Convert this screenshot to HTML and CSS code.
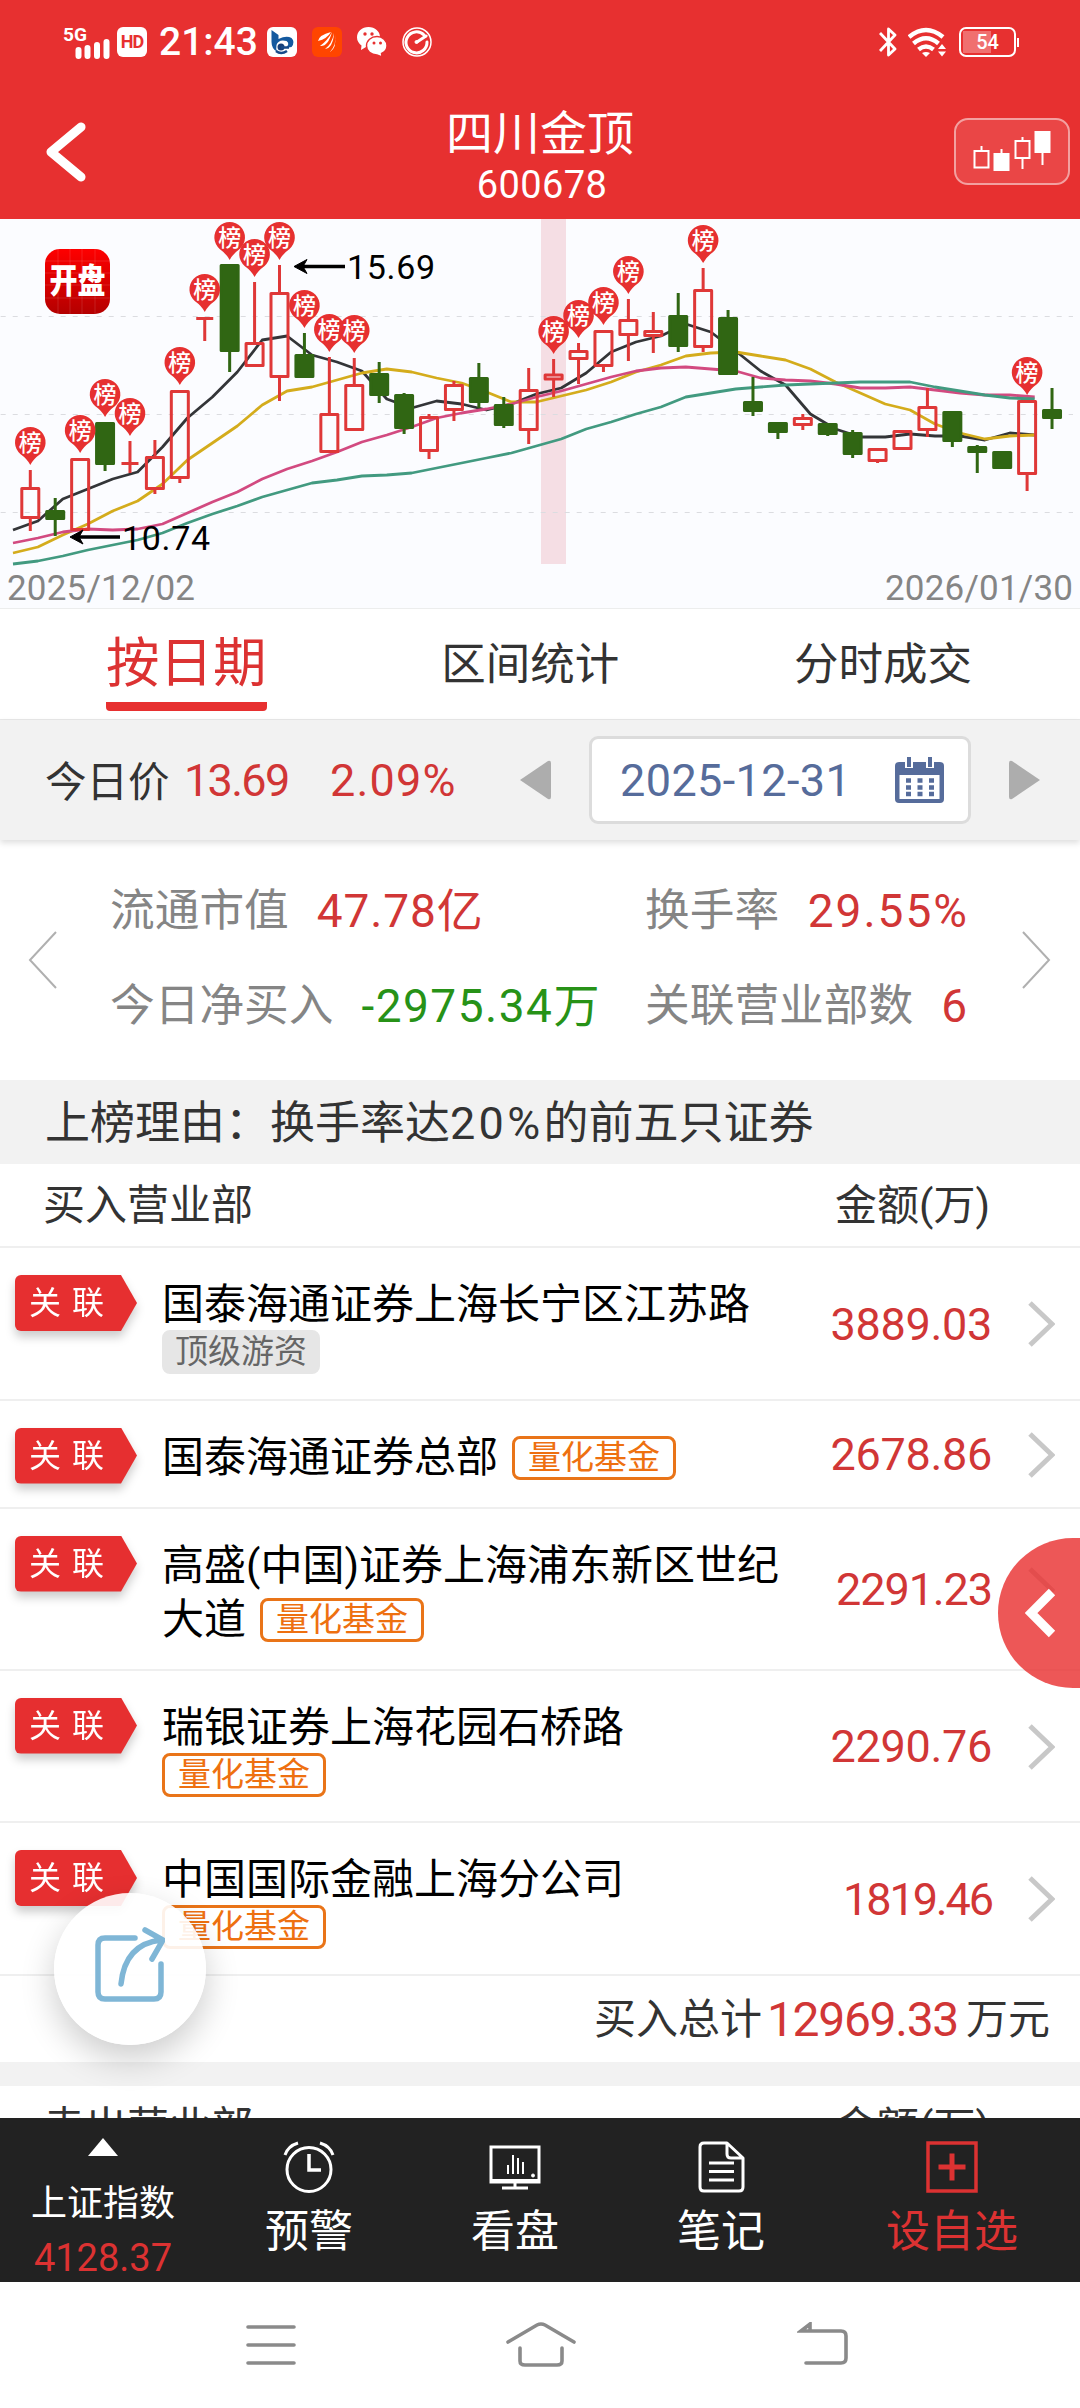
FILE: index.html
```html
<!DOCTYPE html>
<html lang="zh-CN">
<head>
    <meta charset="UTF-8">
    <meta name="viewport" content="width=device-width, initial-scale=1.0">
    <title>四川金顶 600678</title>
    <link rel="stylesheet" href="styles.css">
</head>
<body>
    <div class="page">
        <header class="header">
            <div class="status-bar">
                <div class="status-left">
                    <svg class="signal" width="50" height="34" viewBox="0 -2 50 34">
                        <text x="0" y="13.500" textLength="24" lengthAdjust="spacingAndGlyphs">5G</text>
                        <path d="M15.500 23v6M24.500 21v8M34 18v11M43.500 15v14"/>
                    </svg>
                    <span class="hd">HD</span>
                    <span class="time">21:43</span>
                    <svg class="app-icon" width="30" height="30" viewBox="0 0 30 30">
                        <rect width="30" height="30" rx="6" fill="#fff"/>
                        <path d="M4.500 3l7 5v4q8-4 13-1q4 4 0 9l-6 1q5-4 1-7q-8-2-10 4q-1 4 1 7q-6-3-6-10z" fill="#14599f"/>
                        <circle cx="14" cy="20" r="3.500" fill="#173f78"/>
                        <path d="M14 20.500h8" stroke="#174a89" stroke-width="2.500"/>
                        <path d="M9 24q5 4 11 0" fill="none" stroke="#174a89" stroke-width="2.500"/>
                    </svg>
                    <svg class="app-icon" width="30" height="30" viewBox="0 0 30 30">
                        <rect width="30" height="30" rx="6" fill="#ff4500"/>
                        <g fill="#fff">
                            <path d="M19 5Q7 8 6 14Q15 12 19 5z"/>
                            <path d="M20 5Q16 13 8 19Q16 20 20 5z"/>
                            <path d="M22 6Q20 17 13 22Q21 21 22 6z"/>
                            <path d="M23 7Q25 17 18 25Q25 21 23 7z"/>
                        </g>
                    </svg>
                    <svg class="app-icon" width="30" height="30" viewBox="0 0 30 30">
                        <path d="M11.500 0C5 0 0 4.500 0 10.500c0 3.500 2 6 4.500 8L4 23l5-3c8 1 14-4 14-10C23 4.500 18 0 11.500 0z" fill="#fff"/>
                        <circle cx="8" cy="7" r="1.700" fill="#e73030"/>
                        <circle cx="15" cy="7" r="1.700" fill="#e73030"/>
                        <path d="M20 9.500c-6 0-10.500 4-10.500 9.300S14 28 20 28l5 1.800-.500-3.300c3.500-1.500 5.500-4.500 5.500-7.700 0-5.300-4.500-9.300-10-9.300z" fill="#fff" stroke="#e73030" stroke-width="1.400"/>
                        <circle cx="17" cy="16" r="1.500" fill="#e73030"/>
                        <circle cx="23.500" cy="16" r="1.500" fill="#e73030"/>
                    </svg>
                    <svg class="app-icon" width="30" height="30" viewBox="0 0 30 30" fill="none" stroke="#fff" stroke-linecap="round">
                        <circle cx="15" cy="15" r="14" stroke-width="1.500"/>
                        <path d="M22 8a10.500 10.500 0 1 0 3 7" stroke-width="3"/>
                        <path d="M15 15l9-6" stroke-width="3"/>
                        <circle cx="14.500" cy="15" r="1.500" fill="#fff"/>
                    </svg>
                </div>
                <div class="status-right">
                    <svg width="18" height="30" viewBox="0 0 18 30" fill="none" stroke="#fff" stroke-width="2.800">
                        <path d="M1 6l15 16-6.500 6V2L16 8 1 24" stroke-linejoin="round"/>
                    </svg>
                    <svg class="wifi" width="39" height="30" viewBox="0 0 39 30" fill="none" stroke="#fff" stroke-width="4.500">
                        <path d="M1 10q17-14 34 0M5.500 16.500q12.500-10.500 25 0M10.500 22.500q7.500-6 15 0"/>
                        <path d="M14 26q4-2 8 0l-4 4z" fill="#fff" stroke="none"/>
                        <path d="M30 22l4-5 4 5zM30 24.500h8l-4 5z" fill="#fff" stroke="none"/>
                    </svg>
                    <div class="battery"><span>54</span></div>
                </div>
            </div>
            <div class="title-bar">
                <svg class="back" width="40" height="60" viewBox="0 0 40 60">
                    <path d="M35 5L5 30l30 25"/>
                </svg>
                <div class="title">
                    <h1>四川金顶</h1>
                    <p>600678</p>
                </div>
                <div class="kline-btn">
                    <svg width="78" height="42" viewBox="0 0 78 42" fill="none" stroke="#fff" stroke-width="2">
                        <path d="M8.500 15v5M1.500 20h14v16.500h-14zM28.500 18v5M49.500 6v4M49.500 27v11M42.500 10h14v17h-14zM69.500 22v12"/>
                        <path d="M21.500 23h14v16h-14zM62.500 1h14v20h-14z" fill="#fff"/>
                    </svg>
                </div>
            </div>
        </header>

        <section class="chart">
            <svg id="kline" width="1080" height="389" viewBox="0 0 1080 389">
                <defs>
                    <linearGradient id="logoFill" x1="0" y1="0" x2="0" y2="1">
                        <stop offset="0" stop-color="#fe0000"/>
                        <stop offset="1" stop-color="#b40000"/>
                    </linearGradient>
                </defs>
                <rect class="band" x="541" y="0" width="25" height="345"/>
                <path class="grid" d="M0.700 97.500H1073M0.700 195.500H1073M0.700 293.500H1073"/>
                <g id="averages"></g>
                <g id="candles"></g>
                <g id="pins"></g>
                <g class="logo">
                    <rect x="45" y="30" width="65" height="65" rx="15" fill="url(#logoFill)"/>
                    <path d="M58 30v65M70 30v65M82 30v65M95 30v65M45 42h65M45 54h65M45 66h65M45 79h65"/>
                    <text x="77.500" y="62" transform="translate(0 -1.500) scale(1 1.220)" text-anchor="middle">开盘</text>
                </g>
                <g class="price-mark">
                    <path d="M300 47.500h45M120 318h-46"/>
                    <path class="head" d="M294 47.500l13-7-4 7 4 7zM70 318l13-7-4 7 4 7z"/>
                    <text x="347" y="59.500" textLength="88">15.69</text>
                    <text x="122" y="330.500" textLength="88">10.74</text>
                </g>
                <g class="dates">
                    <text x="7" y="381" textLength="188">2025/12/02</text>
                    <text x="885" y="381" textLength="188">2026/01/30</text>
                </g>
            </svg>
        </section>

        <nav class="tabs">
            <a class="tab active">按日期</a>
            <a class="tab">区间统计</a>
            <a class="tab">分时成交</a>
        </nav>

        <section class="price-bar">
            <span class="price-label">今日价</span>
            <span class="price">13.69</span>
            <span class="change">2.09%</span>
            <svg class="prev" width="31" height="40" viewBox="0 0 31 40"><path d="M0 20L28 1q3-1 3 2v34q0 3-3 2z"/></svg>
            <div class="date-box">
                <span>2025-12-31</span>
                <svg width="49" height="46" viewBox="0 0 49 46">
                    <path d="M4 5h41q4 0 4 4v33q0 4-4 4H4q-4 0-4-4V9q0-4 4-4z" fill="#566c9b"/>
                    <path d="M4.500 18h40v24h-40z" fill="#fff"/>
                    <path d="M14 0v11M35 0v11" stroke="#fff" stroke-width="8"/>
                    <path d="M14 0v10M35 0v10" stroke="#566c9b" stroke-width="4"/>
                    <path d="M11 23.500h28M11 30.500h28M11 37h28" stroke="#566c9b" stroke-width="4.500" stroke-dasharray="5 6.500"/>
                </svg>
            </div>
            <svg class="next" width="31" height="40" viewBox="0 0 31 40"><path d="M31 20L3 1Q0 0 0 3v34q0 3 3 2z"/></svg>
        </section>

        <section class="stats">
            <svg class="arrow" width="30" height="58" viewBox="0 0 30 58"><path d="M28 1L2 29l26 28"/></svg>
            <dl class="stats-grid">
                <div><dt>流通市值</dt><dd class="red">47.78亿</dd></div>
                <div class="spread"><dt>换手率</dt><dd class="red percent">29.55%</dd></div>
                <div><dt>今日净买入</dt><dd class="green">-2975.34万</dd></div>
                <div class="spread"><dt>关联营业部数</dt><dd class="red">6</dd></div>
            </dl>
            <svg class="arrow" width="30" height="58" viewBox="0 0 30 58"><path d="M2 1l26 28L2 57"/></svg>
        </section>

        <div class="reason">上榜理由：换手率达<span>20%</span>的前五只证券</div>

        <section class="branches">
            <div class="branch-head"><span>买入营业部</span><span>金额(万)</span></div>
            <div class="row">
                <span class="badge"><i>关联</i></span>
                <div class="name">国泰海通证券上海长宁区江苏路<span class="tag gray below">顶级游资</span></div>
                <span class="amount">3889.03</span>
                <svg class="more" width="27" height="46" viewBox="0 0 27 46"><path d="M2 2l22 21L2 44"/></svg>
            </div>
            <div class="row single">
                <span class="badge"><i>关联</i></span>
                <div class="name">国泰海通证券总部<span class="tag">量化基金</span></div>
                <span class="amount">2678.86</span>
                <svg class="more" width="27" height="46" viewBox="0 0 27 46"><path d="M2 2l22 21L2 44"/></svg>
            </div>
            <div class="row wrapped">
                <span class="badge"><i>关联</i></span>
                <div class="name">高盛(中国)证券上海浦东新区世纪大道<span class="tag">量化基金</span></div>
                <span class="amount narrow">2291.23</span>
                <svg class="more" width="27" height="46" viewBox="0 0 27 46"><path d="M2 2l22 21L2 44"/></svg>
            </div>
            <div class="row">
                <span class="badge"><i>关联</i></span>
                <div class="name">瑞银证券上海花园石桥路<span class="tag below">量化基金</span></div>
                <span class="amount">2290.76</span>
                <svg class="more" width="27" height="46" viewBox="0 0 27 46"><path d="M2 2l22 21L2 44"/></svg>
            </div>
            <div class="row">
                <span class="badge"><i>关联</i></span>
                <div class="name">中国国际金融上海分公司<span class="tag below">量化基金</span></div>
                <span class="amount narrower">1819.46</span>
                <svg class="more" width="27" height="46" viewBox="0 0 27 46"><path d="M2 2l22 21L2 44"/></svg>
            </div>
            <div class="total">买入总计<b>12969.33</b>万元</div>
        </section>

        <section class="branches sell">
            <div class="branch-head"><span>卖出营业部</span><span>金额(万)</span></div>
        </section>

        <footer class="toolbar">
            <div class="index">
                <svg width="30" height="18" viewBox="0 0 30 18"><path d="M15 0l15 18H0z" fill="#fff"/></svg>
                <span class="index-name">上证指数</span>
                <span class="index-value">4128.37</span>
            </div>
            <div class="tool">
                <svg width="52" height="52" viewBox="0 0 52 52">
                    <circle cx="26" cy="28.500" r="22"/>
                    <path d="M26 13v16h12" stroke-width="3.500"/>
                    <path d="M2 14Q5 5 15 2M50 14Q47 5 37 2"/>
                </svg>
                <span>预警</span>
            </div>
            <div class="tool">
                <svg width="52" height="52" viewBox="0 0 52 52">
                    <path d="M2 6h48v35H2zM26 41v5M13 47h26"/>
                    <path d="M2 40h48" stroke-width="4"/>
                    <path d="M19 24v9M24 14v19M29 17v16M34 21v12" stroke-width="2"/>
                    <circle cx="44" cy="34.500" r="1.500" fill="#fff" stroke-width="1"/>
                </svg>
                <span>看盘</span>
            </div>
            <div class="tool">
                <svg width="52" height="52" viewBox="0 0 52 52">
                    <path d="M9 2h23L48 17v29q0 4-4 4H9q-4 0-4-4V6q0-4 4-4zM32 2v11q0 4 4 4h12" stroke-linejoin="round"/>
                    <path d="M14 22h25M14 30.500h25M14 39h25"/>
                </svg>
                <span>笔记</span>
            </div>
            <div class="tool add">
                <svg width="52" height="52" viewBox="0 0 52 52">
                    <path d="M2 2h48v48H2z"/>
                    <path d="M26 12.500v27M12.500 26h27" stroke-width="5"/>
                </svg>
                <span>设自选</span>
            </div>
        </footer>

        <div class="system-nav">
            <svg width="50" height="46" viewBox="0 0 50 46"><path d="M2 5h46M2 23h46M2 41h46"/></svg>
            <svg class="home" width="70" height="46" viewBox="0 0 70 46"><path d="M2 20L31 3q4-2 8 0l29 17M14 26v13q0 4 5 4h32q5 0 5-4V26"/></svg>
            <svg width="52" height="46" viewBox="0 0 52 46"><path d="M9 41h35q5 0 5-5V14q0-5-5-5H4L13 2v6"/></svg>
        </div>

        <div class="share-btn">
            <svg width="70" height="78" viewBox="0 0 70 78">
                <path d="M40 11H10q-7 0-7 7v47q0 7 7 7h49q7 0 7-7V37"/>
                <path d="M26 57Q30 17 66 13M50 3l18 10-11 19"/>
            </svg>
        </div>
        <div class="drawer-btn">
            <svg width="32" height="50" viewBox="0 0 32 50"><path d="M27 4L6 25l21 21"/></svg>
        </div>
    </div>
    <script src="chart.js"></script>
</body>
</html>
```

FILE: styles.css
```css
* {
    box-sizing: border-box;
}
body {
    margin: 0;
    background: #fff;
    color: #333;
    font-family: Roboto, "Noto Sans CJK SC", sans-serif;
}
h1, p, dl, dd {
    margin: 0;
    font-weight: 400;
}
svg {
    display: block;
    flex: none;
}
.page {
    position: relative;
    width: 1080px;
    height: 2408px;
    overflow: hidden;
    display: flex;
    flex-direction: column;
}
.page > * {
    flex: none;
}

/* header */
.header {
    height: 219px;
    background: #e73030;
    color: #fff;
}
.status-bar {
    display: flex;
    justify-content: space-between;
    height: 84px;
    padding: 0 64px 0 63px;
    align-items: center;
}
.status-left, .status-right {
    display: flex;
    align-items: center;
}
.signal {
    overflow: visible;
}
.signal text {
    font-size: 19px;
    font-weight: 700;
    fill: #fff;
}
.signal path {
    stroke: #fff;
    stroke-width: 6;
    stroke-linecap: round;
}
.hd {
    width: 30px;
    height: 30px;
    margin-left: 4px;
    border-radius: 6px;
    background: #fff;
    color: #e73030;
    font-size: 18px;
    font-weight: 700;
    line-height: 30px;
    text-align: center;
    letter-spacing: -1px;
}
.time {
    width: 105px;
    margin-left: 12px;
    font-size: 39px;
    font-weight: 500;
    line-height: 40px;
}
.app-icon {
    margin-left: 3px;
    margin-right: 12px;
}
.wifi {
    margin: 0 12px 0 11px;
}
.battery {
    position: relative;
    width: 57px;
    height: 30px;
    border: 2px solid #fff;
    border-radius: 7px;
    background: linear-gradient(90deg, #f07070 28px, transparent 28px) 2px 2px / 49px 22px no-repeat;
    font-size: 20px;
    font-weight: 500;
    line-height: 27px;
    text-align: center;
}
.battery::after {
    content: "";
    position: absolute;
    right: -5px;
    top: 9px;
    width: 2px;
    height: 9px;
    background: #fff;
}
.title-bar {
    display: grid;
    grid-template-columns: 126px 1fr 116px;
    align-items: center;
    height: 135px;
    padding: 0 10px 0 0;
}
.back {
    margin-left: 46px;
    margin-top: 1px;
}
.back path {
    fill: none;
    stroke: #fff;
    stroke-width: 9;
    stroke-linecap: round;
    stroke-linejoin: round;
}
.title {
    padding-top: 6px;
    text-align: center;
}
.title h1 {
    font-size: 47px;
    line-height: 60px;
}
.title p {
    padding-left: 4px;
    font-size: 38px;
    line-height: 42px;
    letter-spacing: 0.4px;
}
.kline-btn {
    display: flex;
    align-items: center;
    justify-content: center;
    height: 67px;
    border: 2px solid #f3a0a0;
    border-radius: 14px;
    background: #ea4646;
}

/* chart */
.chart {
    height: 390px;
    border-bottom: 1px solid #eceded;
    background: #fbfcff;
}
.band {
    fill: #f5dee4;
}
.grid {
    stroke: #dbdce0;
    stroke-width: 1;
    stroke-dasharray: 5 7;
}
.average {
    fill: none;
    stroke-width: 2.8;
    stroke-linejoin: round;
}
.up {
    fill: none;
    stroke: #df3838;
    stroke-width: 3;
    stroke-linejoin: round;
}
.down {
    fill: #306613;
    stroke: #306613;
    stroke-width: 3;
    stroke-linejoin: round;
}
.pin path {
    fill: #e63030;
}
.pin text {
    fill: #fff;
    font-size: 23px;
    font-weight: 500;
    text-anchor: middle;
}
.logo path {
    stroke: #fff;
    stroke-opacity: 0.12;
    stroke-width: 1;
}
.logo text {
    fill: #fff;
    font-size: 28px;
    font-weight: 900;
}
.price-mark path {
    stroke: #000;
    stroke-width: 3.5;
}
.price-mark .head {
    stroke-width: 1;
}
.price-mark text {
    font-size: 34px;
    fill: #000;
}
.dates text {
    font-size: 35px;
    fill: #858585;
}

/* tabs */
.tabs {
    display: flex;
    justify-content: space-between;
    height: 111px;
    padding: 0 108px 0 106px;
    border-bottom: 1px solid #e8e8e8;
}
.tab {
    font-size: 44.5px;
    line-height: 112px;
}
.tab.active {
    height: 102px;
    border-bottom: 9px solid #e73030;
    border-radius: 0 0 4px 4px;
    color: #dc3232;
    font-size: 53.5px;
    line-height: 109px;
}

/* price + date picker */
.price-bar {
    position: relative;
    display: flex;
    align-items: center;
    height: 120px;
    padding-left: 45px;
    background: #f2f2f2;
    box-shadow: 0 3px 6px rgba(0,0,0,0.13);
    font-size: 45px;
}
.price-label {
    width: 139px;
    margin-top: -3px;
    font-size: 41.5px;
}
.price, .change {
    color: #d13636;
}
.price {
    width: 146px;
    letter-spacing: -1.7px;
}
.change {
    width: 190px;
    letter-spacing: 1.2px;
}
.prev path, .next path {
    fill: #adadad;
}
.date-box {
    display: flex;
    align-items: center;
    justify-content: space-between;
    width: 382px;
    height: 88px;
    margin: 0 38px;
    padding: 0 24px 0 28px;
    border: 3px solid #dcdcdc;
    border-radius: 9px;
    background: #fff;
    color: #566c9b;
}
.date-box span {
    letter-spacing: 0.4px;
}

/* stats */
.stats {
    display: flex;
    align-items: center;
    height: 240px;
    padding: 0 28px;
}
.stats-grid {
    display: grid;
    grid-template-columns: 535px 323px;
    grid-template-rows: 95px 95px;
    width: 963px;
    padding-left: 52px;
}
.stats-grid div {
    display: flex;
    align-items: center;
    line-height: 60px;
    padding-bottom: 4px;
}
.stats-grid .spread {
    justify-content: space-between;
}
.stats-grid dt {
    margin-right: 28px;
    color: #858585;
    font-size: 44.7px;
    white-space: nowrap;
}
.stats-grid .spread dt {
    margin-right: 0;
}
.stats-grid dd {
    font-size: 46px;
    letter-spacing: 0.9px;
    white-space: nowrap;
}
.stats-grid .green {
    letter-spacing: 1.5px;
}
.stats-grid .percent {
    letter-spacing: 2px;
    margin-right: -1px;
}
.red {
    color: #d13636;
}
.green {
    color: #279217;
}
.arrow path {
    fill: none;
    stroke: #b0b0b0;
    stroke-width: 2;
}
.reason {
    height: 84px;
    padding-left: 45px;
    background: #f2f2f2;
    font-size: 45px;
    line-height: 87px;
}
.reason span {
    letter-spacing: 3.3px;
}

/* branch list */
.branch-head {
    display: flex;
    justify-content: space-between;
    height: 84px;
    padding: 0 90px 0 43px;
    border-bottom: 2px solid #efefef;
    font-size: 42px;
    line-height: 83px;
}
.row {
    display: flex;
    align-items: flex-start;
    height: 152.5px;
    padding-left: 15px;
    border-bottom: 2px solid #efefef;
}
.row.single {
    height: 108px;
}
.row.wrapped {
    height: 162px;
}
.badge {
    width: 122px;
    margin: 27px 25px 0 0;
    filter: drop-shadow(0 6px 5px rgba(0,0,0,0.2));
}
.badge i {
    display: block;
    height: 56px;
    padding-left: 14px;
    border-radius: 6px 0 0 6px;
    background: #e62f30;
    clip-path: polygon(0 0, 106px 0, 100% 50%, 106px 100%, 0 100%);
    color: #fff;
    font-size: 32px;
    font-style: normal;
    line-height: 56px;
    letter-spacing: 11px;
}
.name {
    width: 640px;
    padding-top: 30px;
    color: #000;
    font-size: 42px;
    line-height: 54px;
}
.tag {
    display: inline-block;
    width: 164px;
    height: 44px;
    margin-left: 14px;
    border: 3px solid #e97418;
    border-radius: 8px;
    color: #ee7010;
    font-size: 33px;
    line-height: 38px;
    text-align: center;
    vertical-align: 3px;
}
.name .tag:not(.below) {
    margin-top: -10px;
    margin-bottom: -10px;
}
.tag.gray {
    width: 158px;
    border-color: #e6e6e6;
    background: #e6e6e6;
    color: #666;
}
.tag.below {
    display: block;
    margin: -2px 0 0;
}
.amount {
    align-self: center;
    width: 190px;
    padding-top: 2px;
    color: #d13636;
    font-size: 45px;
    text-align: right;
    letter-spacing: -0.3px;
}
.amount.narrow {
    letter-spacing: -1.1px;
}
.amount.narrower {
    letter-spacing: -2.1px;
}
.more {
    align-self: center;
    margin: 2px 0 0 36px;
}
.more path {
    fill: none;
    stroke: #c8c8c8;
    stroke-width: 5;
}
.total {
    height: 86px;
    padding-right: 30px;
    font-size: 42px;
    line-height: 87px;
    text-align: right;
}
.total b {
    margin: 0 8px 0 5px;
    color: #d13636;
    font-size: 48px;
    font-weight: 400;
    letter-spacing: -1.3px;
    vertical-align: -2px;
    line-height: 1;
}
.sell {
    height: 56px;
    border-top: 24px solid #f2f2f2;
    overflow: hidden;
}

/* bottom toolbar */
.toolbar {
    display: grid;
    grid-template-columns: repeat(4, 206px) 1fr;
    height: 164px;
    background: #222;
    color: #fff;
}
.index, .tool {
    display: flex;
    flex-direction: column;
    align-items: center;
}
.index {
    padding-top: 20px;
}
.index-name {
    margin-top: 21px;
    font-size: 36px;
    line-height: 54px;
}
.index-value {
    color: #dc3232;
    font-size: 38px;
    line-height: 54px;
}
.tool {
    padding-top: 23px;
    font-size: 44px;
    line-height: 78px;
}
.tool svg {
    fill: none;
    stroke: #fff;
    stroke-width: 3;
}
.tool.add {
    color: #dc3232;
}
.tool.add svg {
    stroke: #dc3232;
    stroke-width: 3.5;
}
.system-nav {
    display: flex;
    align-items: center;
    justify-content: space-between;
    height: 126px;
    padding: 0 231px 0 246px;
}
.system-nav .home {
    margin-right: 12px;
}
.system-nav path {
    fill: none;
    stroke: #8a8a8a;
    stroke-width: 3.6;
    stroke-linecap: round;
}

/* floating buttons */
.share-btn, .drawer-btn {
    position: absolute;
    display: flex;
    align-items: center;
}
.share-btn {
    left: 54px;
    top: 1893px;
    width: 152px;
    height: 152px;
    justify-content: center;
    border-radius: 50%;
    background: rgba(255,255,255,0.9);
    box-shadow: 0 14px 34px rgba(0,0,0,0.2);
}
.share-btn svg {
    margin-top: -6px;
}
.share-btn path {
    fill: none;
    stroke: #7fb6d6;
    stroke-width: 5.5;
    stroke-linecap: round;
}
.drawer-btn {
    right: 0;
    top: 1538px;
    width: 82px;
    height: 150px;
    padding-left: 27px;
    border-radius: 75px 0 0 75px;
    background: rgba(233,50,50,0.82);
}
.drawer-btn path {
    fill: none;
    stroke: #fff;
    stroke-width: 9;
}
```

FILE: chart.js
```js
const NS = 'http://www.w3.org/2000/svg';
const STEP = 24.92;

// [high, body top, body bottom, low, direction, on the list]
const candles = [
  [251, 268, 300, 312, 'up', 1],
  [279, 291, 301, 317, 'down', 0],
  [239, 239, 312, 312, 'up', 1],
  [203, 203, 246, 252, 'down', 1],
  [222, 243, 246, 254, 'up', 1],
  [221, 237, 271, 275, 'up', 0],
  [171, 171, 260, 264, 'up', 1],
  [98, 98, 101, 122, 'up', 1],
  [46, 45, 133, 153, 'down', 1],
  [63, 123, 148, 148, 'up', 1],
  [46, 73, 159, 182, 'up', 1],
  [114, 135, 159, 159, 'down', 1],
  [138, 194, 234, 234, 'up', 1],
  [139, 165, 212, 212, 'up', 1],
  [143, 154, 177, 184, 'down', 0],
  [174, 175, 210, 215, 'down', 0],
  [195, 197, 233, 240, 'up', 0],
  [162, 165, 192, 202, 'up', 0],
  [144, 158, 184, 189, 'down', 0],
  [178, 185, 207, 209, 'down', 0],
  [149, 170, 212, 225, 'up', 0],
  [140, 154.5, 161.5, 178, 'up', 1],
  [124, 131, 141, 165, 'up', 1],
  [111, 111, 148, 153, 'up', 1],
  [80, 100, 117, 142, 'up', 1],
  [93, 111, 118, 134, 'up', 0],
  [74, 96, 128, 133, 'down', 0],
  [49, 70, 129, 133, 'up', 1],
  [91, 98, 156, 156, 'down', 0],
  [158, 182, 193, 197, 'down', 0],
  [203, 203, 214, 220, 'down', 0],
  [195, 198, 207, 211, 'up', 0],
  [204, 204, 216, 217, 'down', 0],
  [211, 213, 236, 239, 'down', 0],
  [229, 229, 243, 244, 'up', 0],
  [211, 211, 231, 231, 'up', 0],
  [169, 187, 212, 218, 'up', 0],
  [192, 192, 223, 228, 'down', 0],
  [226, 227, 234, 254, 'down', 0],
  [232, 232, 250, 250, 'down', 0],
  [181, 181, 256, 272, 'up', 1],
  [169, 190, 200, 210, 'down', 0]
];

const averages = [
  { color: '#333538', points: [311, 302, 280, 270, 260, 253, 228, 199, 178, 153, 121, 117, 136, 143, 152, 180, 189, 182, 185, 191, 185, 175, 169, 154, 133, 123, 117, 105, 113, 132, 152, 166, 195, 210, 218, 218, 215, 217, 217, 221, 214, 216] },
  { color: '#d4ac1c', points: [334, 328, 316, 305, 292, 282, 265, 241, 224, 207, 186, 172, 168, 161, 154, 150, 153, 159, 164, 173, 183, 183, 177, 171, 163, 153, 146, 137, 134, 133, 137, 141, 150, 163, 174, 185, 191, 205, 214, 220, 217, 216] },
  { color: '#d24a80', points: [324, 319, 313, 310, 311, 310, 305, 294, 283, 273, 260, 250, 242, 233, 223, 216, 208, 199, 194, 190, 185, 178, 172, 165, 158, 152, 149, 148, 150, 152, 159, 161, 162, 165, 169, 169, 168, 171, 174, 176, 176, 178] },
  { color: '#429a80', points: [345, 342, 337, 331, 326, 321, 314, 304, 295, 287, 278, 271, 264, 261, 257, 256, 254, 249, 244, 239, 234, 227, 220, 210, 203, 195, 188, 178, 174, 170, 168, 166, 165, 164, 163, 163, 163, 168, 172, 176, 179, 180] }
];

function add(parent, name, attrs) {
  const el = document.createElementNS(NS, name);
  for (const key in attrs) el.setAttribute(key, attrs[key]);
  parent.appendChild(el);
  return el;
}

const lineLayer = document.getElementById('averages');
averages.forEach(({ color, points }) => {
  add(lineLayer, 'polyline', {
    class: 'average',
    stroke: color,
    points: points.map((y, i) => (13 + i * STEP).toFixed(1) + ',' + y).join(' ')
  });
});

const candleLayer = document.getElementById('candles');
const pinLayer = document.getElementById('pins');
candles.forEach(([high, top, bottom, low, dir, listed], i) => {
  const x = 30.3 + i * STEP;
  let d = `M${x} ${high}V${top + 1}M${x} ${bottom - 1}V${low}`;
  if (bottom - top <= 3) {
    d += `M${x - 8.5} ${top + 1.5}h17`;
  } else {
    d += `M${x - 8.5} ${top + 1.5}h17V${bottom - 1.5}h-17z`;
  }
  add(candleLayer, 'path', { class: dir, d });

  if (listed) {
    const pin = add(pinLayer, 'g', { class: 'pin', transform: `translate(${x} ${high - 5})` });
    add(pin, 'path', { d: 'M0 0Q-3 -6 -10 -11A15.300 15.300 0 1 1 10 -11Q3 -6 0 0z' });
    add(pin, 'text', { x: 0, y: -14.5 }).textContent = '榜';
  }
});
```
